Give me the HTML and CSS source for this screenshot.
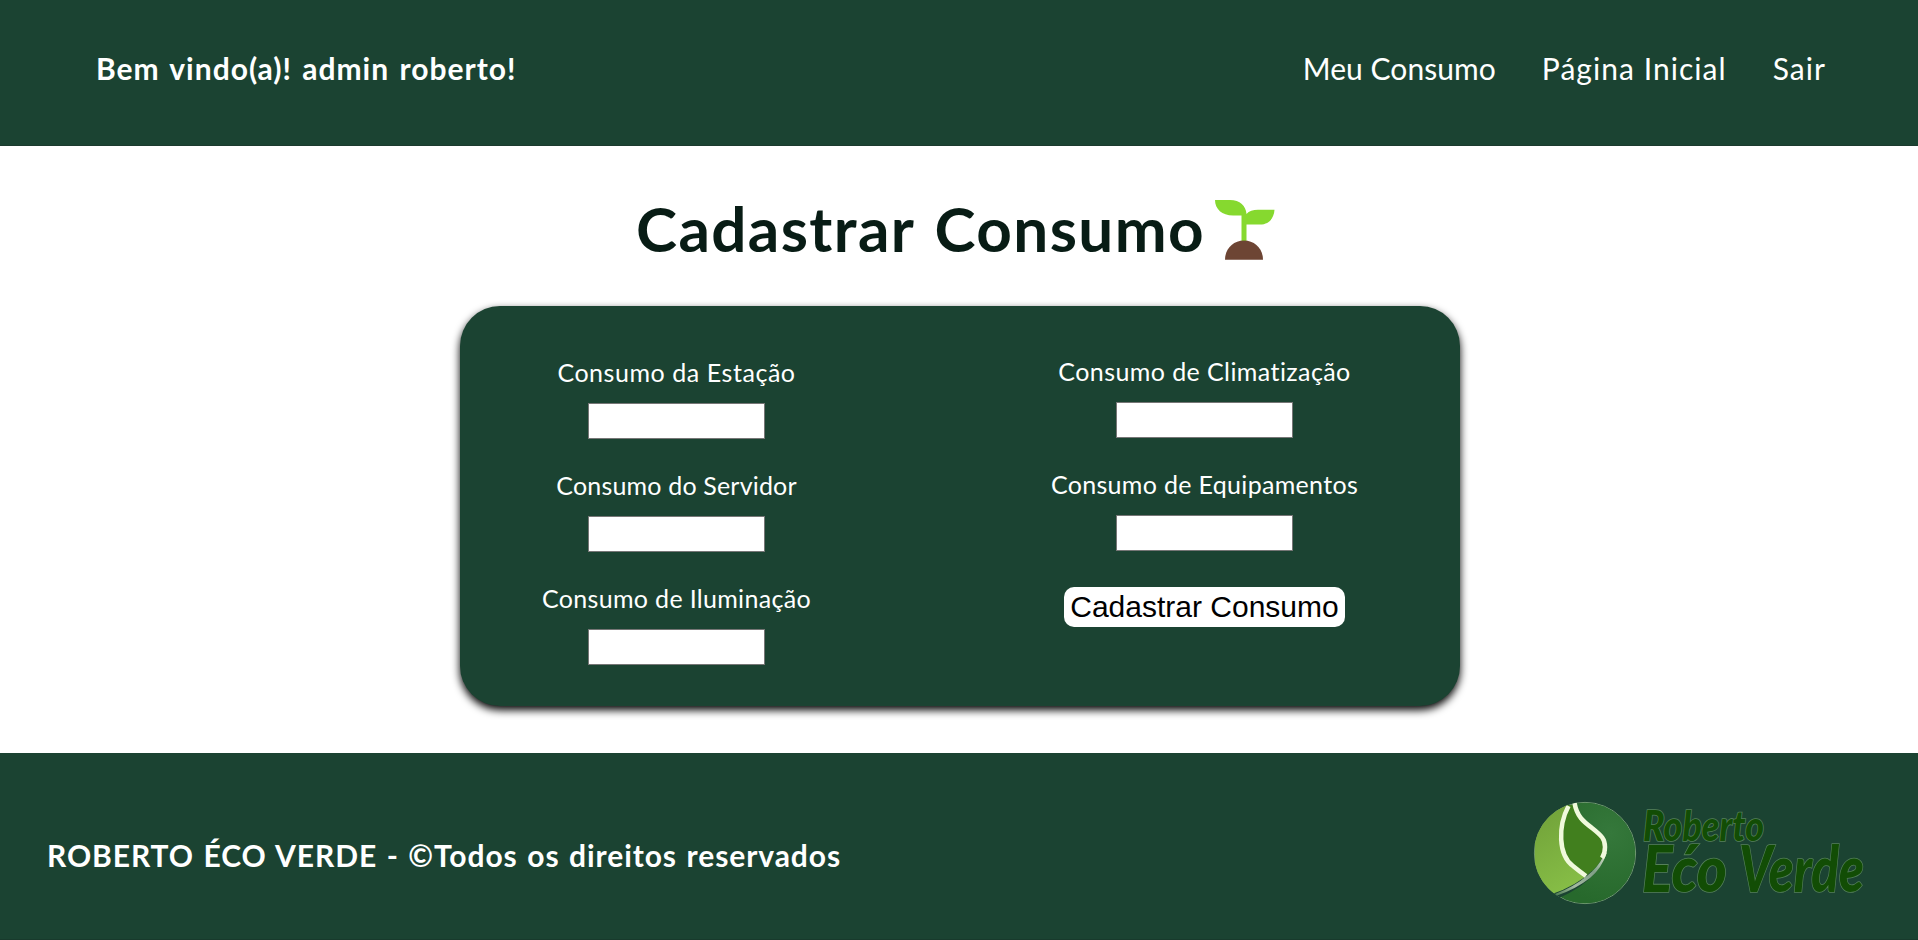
FILE: index.html
```html
<!DOCTYPE html>
<html lang="pt-BR">
<head>
<meta charset="utf-8">
<title>Cadastrar Consumo</title>
<link rel="stylesheet" href="styles.css">
</head>
<body>
<header class="header">
  <h2 class="welcome">Bem vindo(a)! admin roberto!</h2>
  <nav class="nav">
    <a class="nav-link nav-consumo">Meu Consumo</a>
    <a class="nav-link">Página Inicial</a>
    <a class="nav-link">Sair</a>
  </nav>
</header>
<main class="main">
  <div class="title-row">
    <h1 class="title">Cadastrar Consumo</h1>
    <svg class="sprout" viewBox="0 0 60 60">
      <path fill="#86d92f" d="M0 0H15C25 0 31 6 31.500 14C34 11 38 9.700 43 9.700H59.500C59 18 54 24.500 45 24.500H31.500V42H26.500V15.500H18C7 15.500 0 9 0 0Z"/>
      <path fill="#6d4534" d="M10 59.700C10 49 18 40.500 29 40.500S48 49 48 59.700Z"/>
    </svg>
  </div>
  <form class="card">
    <div class="column column-left">
      <label class="field"><span class="label label-estacao">Consumo da Estação</span><input class="input" type="text"></label>
      <label class="field"><span class="label label-servidor">Consumo do Servidor</span><input class="input" type="text"></label>
      <label class="field"><span class="label">Consumo de Iluminação</span><input class="input" type="text"></label>
    </div>
    <div class="column column-right">
      <label class="field"><span class="label label-clima">Consumo de Climatização</span><input class="input" type="text"></label>
      <label class="field"><span class="label">Consumo de Equipamentos</span><input class="input" type="text"></label>
      <button class="submit" type="button">Cadastrar Consumo</button>
    </div>
  </form>
</main>
<footer class="footer">
  <h2 class="rights">ROBERTO ÉCO VERDE - ©Todos os direitos reservados</h2>
  <svg class="logo" viewBox="0 0 340 110">
    <defs>
      <linearGradient id="lime" x1="0" y1="0" x2="0.3" y2="1"><stop offset="0" stop-color="#6f9f38"/><stop offset="1" stop-color="#86bd46"/></linearGradient>
      <linearGradient id="swoosh" x1="1" y1="0" x2="0" y2="1"><stop offset="0" stop-color="#dfead2"/><stop offset="0.35" stop-color="#7f9f86"/><stop offset="0.7" stop-color="#a3b9a2"/><stop offset="1" stop-color="#4d7c52"/></linearGradient>
      <radialGradient id="forest" cx="0.75" cy="0.3" r="0.7"><stop offset="0" stop-color="#35783b"/><stop offset="1" stop-color="#27692c"/></radialGradient>
      <clipPath id="disc"><circle cx="55" cy="55" r="51"/></clipPath>
    </defs>
    <circle cx="55" cy="55" r="50.600" fill="none" stroke="#7ba27a" stroke-width="1"/>
    <g clip-path="url(#disc)">
      <rect x="4.800" y="4.800" width="100.400" height="100.400" rx="50.200" fill="url(#forest)"/>
      <path fill="url(#lime)" d="M4.800 4H39C26 32 30 60 56 79C46 88 36 93 25 96L4.800 100Z"/>
      <path fill="#417f1e" d="M38 7H46C50 30 76 30 75 50C74 61 66 70 56 78C27 60 27 36 38 7Z"/>
      <path fill="#1b4332" d="M22 96Q46 88 62 73L66 74Q52 90 29 100L22 106Z"/>
      <path fill="url(#swoosh)" d="M25 96Q44 89 58 77Q68 69 73 59L77 54Q72 70 60 80Q46 91 27 97.500Z"/>
      <path fill="none" stroke="#f0f9dc" stroke-width="4.500" d="M38.500 8C28 28 28 57 43 68Q49 73 56 78"/>
      <path fill="none" stroke="#f0f9dc" stroke-width="4.500" d="M44.500 5C47 19 54 24 62 30C72 38 75 41 75 49C75 54 74 57 72 60"/>
    </g>
    <g class="logo-text">
      <text x="113" y="43" font-size="42" textLength="121" lengthAdjust="spacingAndGlyphs">Roberto</text>
      <text x="112" y="94" font-size="64" textLength="85" lengthAdjust="spacingAndGlyphs">Ećo</text>
      <text x="209" y="94" font-size="64" textLength="125" lengthAdjust="spacingAndGlyphs">Verde</text>
    </g>
  </svg>
</footer>
</body>
</html>
```
FILE: styles.css
```css
* { box-sizing: border-box; margin: 0; padding: 0; }
body {
  display: flex;
  flex-direction: column;
  height: 940px;
  overflow: hidden;
  background: #fff;
  font-family: Lato, sans-serif;
  font-variant-ligatures: none;
  color: #fff;
}
.header {
  display: flex;
  justify-content: space-between;
  align-items: center;
  height: 146px;
  padding: 0 92px 9px 96px;
  background: #1b4332;
  border-bottom: 1px solid #1c3a2e;
}
.welcome, .rights {
  font-size: 30px;
  font-weight: 700;
  line-height: 40px;
  white-space: nowrap;
}
.welcome { letter-spacing: 1px; word-spacing: 2px; }
.nav { display: flex; gap: 46px; }
.nav-link { font-size: 30px; line-height: 40px; letter-spacing: 1.05px; white-space: nowrap; }
.nav-consumo { letter-spacing: 0.05px; }
.main { display: flex; flex-direction: column; align-items: center; height: 607px; }
.title-row {
  display: flex;
  align-items: flex-start;
  gap: 10px;
  height: 160px;
  padding: 54px 7px 0 0;
}
.title {
  margin-top: -2px;
  font-size: 62px;
  line-height: 60px;
  letter-spacing: 1.4px;
  word-spacing: 4px;
  color: #081c15;
  white-space: nowrap;
}
.sprout { width: 60px; height: 60px; }
.card {
  display: flex;
  justify-content: space-between;
  width: 1000px;
  height: 400px;
  margin-left: 2px;
  padding: 54px 101px 0 81px;
  border-radius: 40px;
  background: #1b4332;
  box-shadow: 0 4px 8px #000;
}
.column { display: flex; flex-direction: column; align-items: center; }
.column-left { width: 271px; }
.column-right { width: 309px; margin-top: -1px; }
.field { display: flex; flex-direction: column; align-items: center; width: 100%; height: 113px; }
.label {
  margin-bottom: 18px;
  font-size: 25px;
  line-height: 25px;
  letter-spacing: 0.32px;
  white-space: nowrap;
}
.label-estacao { letter-spacing: 0.55px; }
.label-servidor { letter-spacing: 0.18px; }
.label-clima { letter-spacing: 0.42px; }
.input { width: 177px; height: 36px; border: 1px solid #767676; background: #fff; }
.submit {
  width: 281px;
  height: 40px;
  margin-top: 2px;
  border: 0;
  border-radius: 10px;
  background: #fff;
  color: #000;
  font: 30px "Liberation Sans", Arial, sans-serif;
  white-space: nowrap;
}
.footer {
  display: flex;
  justify-content: space-between;
  height: 187px;
  padding: 45px 48px 0 47px;
  background: #1b4332;
  border-bottom: 1px solid #183a2c;
}
.rights { margin-top: 37px; letter-spacing: 0.93px; word-spacing: 1.3px; }
.logo { width: 340px; height: 110px; overflow: visible; }
.logo-text {
  font-family: Lato, sans-serif;
  font-style: italic;
  font-weight: 900;
  fill: #124d05;
  stroke: #55805a;
  stroke-width: 1.6px;
  paint-order: stroke;
}
```
